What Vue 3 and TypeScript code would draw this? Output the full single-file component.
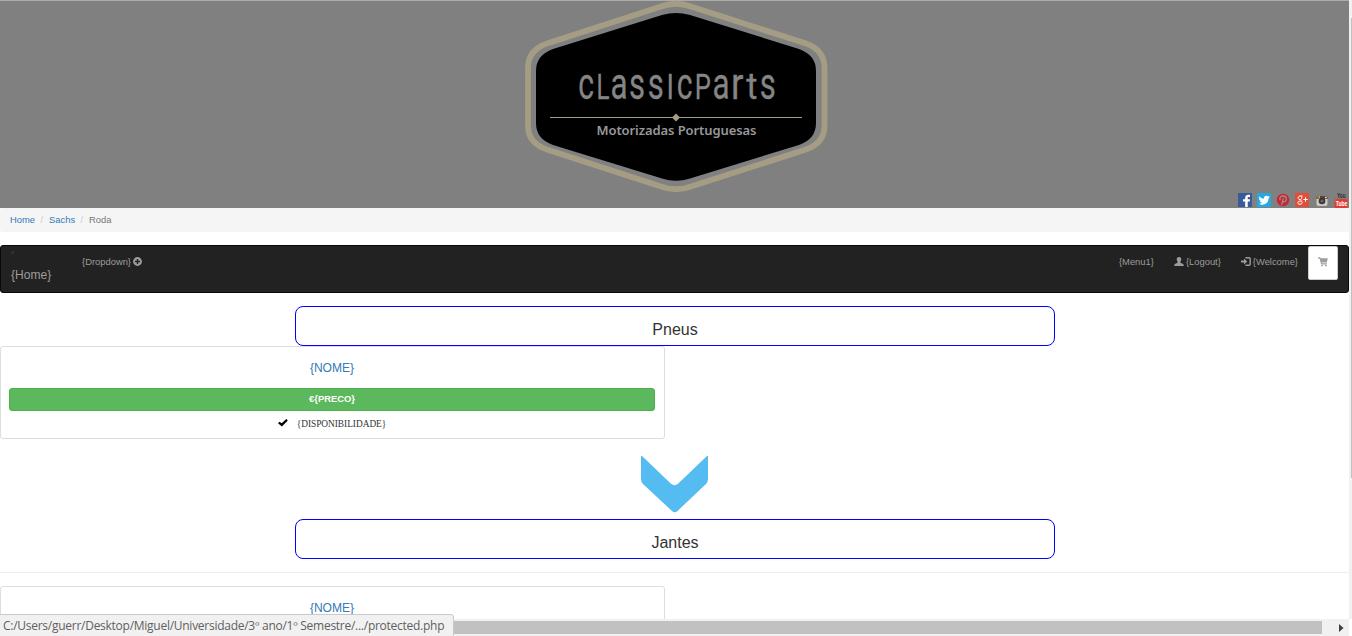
<script setup lang="ts">
interface Glyph {
  ch: string
  x: number
  scale: number
  size: number
}

const wordmark: Glyph[] = [
  { ch: 'c', x: 578.3, scale: 0.67, size: 45 },
  { ch: 'L', x: 596.4, scale: 0.67, size: 36 },
  { ch: 'a', x: 610.4, scale: 0.7, size: 45 },
  { ch: 's', x: 629, scale: 0.69, size: 45 },
  { ch: 's', x: 647.7, scale: 0.69, size: 45 },
  { ch: 'I', x: 666.6, scale: 0.76, size: 36 },
  { ch: 'c', x: 676.7, scale: 0.67, size: 45 },
  { ch: 'P', x: 694.8, scale: 0.71, size: 36 },
  { ch: 'a', x: 712.4, scale: 0.7, size: 45 },
  { ch: 'r', x: 731, scale: 0.82, size: 45 },
  { ch: 't', x: 746.3, scale: 0.92, size: 37 },
  { ch: 's', x: 759.7, scale: 0.69, size: 45 },
]
const crumbs = ['Home', 'Sachs']
</script>

<template>
  <div class="window">
    <div class="viewport">
      <main class="page">
        <header class="banner">
          <svg class="logo" width="304" height="193" viewBox="524 0 304 193">
            <path class="ring" d="M661 6.500Q676 1 691 6.500L806 43.500Q824.500 50 824.500 68V126Q824.500 143 806 149.500L691 186.500Q676 192 661 186.500L547 149.500Q528 143 528 126V68Q528 50 547 43.500Z" />
            <path d="M662 15Q676 11 690 15L799 49Q816 55 816 71V123Q816 139 799 145L690 178.500Q676 183 662 178.500L553 145Q536 139 536 123V71Q536 55 553 49Z" />
            <g class="wordmark">
              <text v-for="(g, i) in wordmark" :key="i" :transform="`translate(${g.x} 99) scale(${g.scale} 1)`" :font-size="g.size">{{ g.ch }}</text>
            </g>
            <path d="M550 117.500H802" stroke="#a59c84" />
            <path d="M676 113.500L680 117.500L676 121.500L672 117.500Z" fill="#a59c84" />
            <text class="tagline" x="596.500" y="135.300" textLength="160">Motorizadas Portuguesas</text>
          </svg>
          <div class="social">
            <svg width="14" height="14" viewBox="0 0 14 14"><rect width="14" height="14" fill="#3a5a99" /><path d="M7.200 14V8.500H5V6.300h2.200V4.700C7.200 2.400 8.700 1.400 12 1.800V4H10.600C9.700 4 9.700 4.500 9.700 5v1.300H12l-.3 2.200h-2V14z" fill="#fff" /></svg>
            <svg width="14" height="14" viewBox="0 0 14 14"><rect width="14" height="14" rx="1" fill="#24aae1" /><path d="M2 3.200C3.500 4.800 5 5.500 7 5.600C6.700 3 9.200 1.700 11 3.400L12.500 2.800L11.800 4.300L12.700 4.200L11.500 5.500C11.400 10.700 6 13.300 1.800 10.700C3.200 10.800 4.200 10.400 5 9.700C3.700 9.500 3 8.900 2.800 8H4C2.700 7.500 2 6.700 2 5.500L3 5.800C1.900 5 1.700 4.200 2 3.200Z" fill="#fff" /></svg>
            <svg width="14" height="14" viewBox="0 0 14 14"><circle cx="7" cy="7" r="6.200" fill="#ca2432" /><path d="M4.300 7.200C2.900 4.500 4.900 3 7.300 3C11.700 3.200 10.800 9 8 8.900C7.200 8.900 6.800 8.400 6.700 8M7.300 5.300L5.600 12" fill="none" stroke="#a08c8c" stroke-width="1.300" /></svg>
            <svg width="14" height="14" viewBox="0 0 14 14"><rect width="14" height="14" rx="1" fill="#e64b37" /><path d="M7.500 3H5.300C2.500 3 2.500 6.600 5 6.600C7.300 6.600 7 3.500 5.700 3.200M5.200 6.700L6.700 8.200C9 11.800 2.400 12.200 2.800 9.500C3 8.400 4.300 8.100 5.800 8.200M8.300 6.500h4.400M10.500 4.300v4.400" fill="none" stroke="#fff" stroke-width="1" /></svg>
            <svg width="14" height="14" viewBox="0 0 14 14"><path d="M1.500 6V4.500Q1.500 3 3 3H11Q12.500 3 12.500 4.500V6Z" fill="#5b4433" /><path d="M3 3v3M4.500 3v3" stroke="#c9a24c" /><path d="M1.500 6h11v5Q12.500 13 10.500 13h-7Q1.500 13 1.500 11Z" fill="#d0c8bd" /><circle cx="7" cy="8" r="3.300" fill="#36373b" /><circle cx="7" cy="8" r="1.600" fill="#62686f" /><rect x="10" y="3.700" width="1.700" height="1.500" fill="#ddd" /></svg>
            <svg class="tube" width="14" height="15" viewBox="0 0 14 15"><rect x=".5" y="6" width="13" height="9" rx="1.500" fill="#e43b35" /><text transform="translate(3 5.300) scale(.68 1)" font-size="7" fill="#302c2c">You</text><text transform="translate(1.700 12.800) scale(.72 1)" font-size="7" fill="#fff">Tube</text></svg>
          </div>
        </header>

        <nav class="breadcrumb">
          <template v-for="c in crumbs" :key="c"><a>{{ c }}</a><i>/</i></template><span>Roda</span>
        </nav>

        <nav class="navbar">
          <span class="dot"></span>
          <span class="brand">{Home}</span>
          <span class="item dropdown">{Dropdown}
            <svg width="9" height="9" viewBox="0 0 9 9"><circle cx="4.500" cy="4.500" r="4.400" /><path d="M4.500 2v5M2 4.500h5" stroke="#222" stroke-width="1.400" /></svg>
          </span>
          <span class="item menu">{Menu1}</span>
          <span class="item logout">
            <svg width="10" height="9" viewBox="0 0 10 9"><path d="M5 0C7 0 7.500 1.500 7.200 3C7 4.100 6.300 4.700 6.300 5.500C6.600 6.500 9.500 6.500 9.700 8V9H.3V8C.5 6.500 3.400 6.500 3.700 5.500C3.700 4.700 3 4.100 2.800 3C2.500 1.500 3 0 5 0Z" /></svg>{Logout}
          </span>
          <span class="item welcome">
            <svg width="10" height="9" viewBox="0 0 10 9"><path d="M0 3.500H3V1.500L6.300 4.500L3 7.500V5.500H0Z" /><path d="M4.500 .8H8Q9.200 .8 9.200 2V7Q9.200 8.200 8 8.200H4.500" fill="none" stroke="#9d9d9d" stroke-width="1.400" /></svg>{Welcome}
          </span>
          <span class="cart">
            <svg width="10" height="10" viewBox="0 0 10 10"><path d="M0 .2H2.100L2.600 1.300H9.800L8.800 5.600H3.700L4 6.300H8.800V7.400H3.200L1.500 1.400H0Z" /><circle cx="4" cy="8.600" r=".9" /><circle cx="7.800" cy="8.600" r=".9" /></svg>
          </span>
        </nav>

        <h3 class="section">Pneus</h3>
        <article class="card">
          <h4>{NOME}</h4>
          <div class="price">€{PRECO}</div>
          <p>
            <svg width="10" height="8" viewBox="0 0 10 8"><path d="M0 4.300L1.600 2.700L3.700 4.200L8.300 0L9.800 1.500L3.900 7.600Z" /></svg>
            <span>{DISPONIBILIDADE}</span>
          </p>
        </article>
        <svg class="arrow" width="68" height="58" viewBox="0 0 68 58"><path d="M1 1.500Q1 .2 2 1L31 28.800Q34.500 31.600 38 28.800L67 1Q68 .2 68 1.500V24Q68 27 66 29L37.500 56Q34.700 58.500 32 56L3 29Q1 27 1 24Z" fill="#55bcf1" /></svg>
        <h3 class="section">Jantes</h3>
        <hr>
        <article class="card">
          <h4>{NOME}</h4>
        </article>
      </main>
      <div class="vbar"><div class="vthumb"></div></div>
    </div>
    <div class="hbar">
      <div class="hthumb"></div>
      <svg width="5" height="8" viewBox="0 0 5 8"><path d="M0 0L4.500 4L0 8Z" fill="#404040" /></svg>
    </div>
    <div class="status"><span>C:/Users/guerr/Desktop/Miguel/Universidade/3º ano/1º Semestre/.../protected.php</span></div>
  </div>
</template>

<style>
body {
  overflow: hidden;
}
</style>

<style scoped>
.window {
  position: relative;
  width: 1352px;
  height: 636px;
  overflow: hidden;
  display: flex;
  flex-direction: column;
  background: #fff;
  font: 9.38px/13.4px "Liberation Sans", Arial, sans-serif;
  color: #333;
}
.window * {
  box-sizing: border-box;
}
svg {
  flex: none;
}
.viewport {
  display: flex;
  height: 619px;
  overflow: hidden;
}
.page {
  width: 1349px;
  display: flex;
  flex-direction: column;
  align-items: flex-start;
}
.banner {
  position: relative;
  flex: none;
  width: 100%;
  height: 208px;
  background: #808080;
  border-top: 1px solid #acacac;
  display: flex;
  justify-content: center;
}
.logo {
  display: block;
  margin-top: -1px;
  margin-left: 3px;
}
.ring {
  fill: none;
  stroke: #a59c84;
  stroke-width: 5.8;
}
.wordmark {
  fill: #858585;
  stroke: #858585;
  stroke-width: 0.3;
  font-family: Roboto, sans-serif;
}
.tagline {
  fill: #989898;
  font: 600 13px "Noto Sans", sans-serif;
}
.social {
  position: absolute;
  right: 1px;
  bottom: 1px;
  display: flex;
  align-items: flex-end;
  gap: 5.3px;
}
.social .tube {
  overflow: visible;
  margin-bottom: -0.5px;
}
.social text {
  font-family: "Liberation Sans", sans-serif;
  font-weight: bold;
}
.breadcrumb {
  flex: none;
  width: 100%;
  height: 24px;
  padding: 6px 10px 4px;
  background: #f5f5f5;
  border-radius: 3px;
  color: #777;
}
.breadcrumb a {
  color: #337ab7;
}
.breadcrumb i {
  font-style: normal;
  color: #ccc;
  padding: 0 6px 0 5.4px;
}
.navbar {
  flex: none;
  display: flex;
  width: 100%;
  height: 48px;
  margin-top: 13px;
  padding: 0 10px;
  background: #222;
  border: 1px solid #080808;
  border-radius: 3px;
  color: #9d9d9d;
  fill: #9d9d9d;
  position: relative;
}
.dot {
  position: absolute;
  left: 10px;
  top: 5px;
  width: 3px;
  height: 3px;
  border-radius: 50%;
  background: #333;
}
.brand {
  width: 71px;
  font-size: 12.06px;
  padding-top: 23px;
}
.item {
  display: flex;
  gap: 2px;
  height: 13px;
  margin-top: 10px;
}
.item svg {
  margin-top: 1px;
}
.menu {
  margin-left: auto;
  margin-right: 20px;
}
.logout {
  margin-right: 20px;
}
.welcome {
  margin-right: 10px;
}
.cart {
  width: 30px;
  height: 34px;
  margin-top: 0;
  background: #fff;
  border: 1px solid #ccc;
  border-radius: 2px;
  padding: 10px 9px;
}
.cart svg {
  display: block;
}
.section {
  flex: none;
  width: 760px;
  height: 40px;
  margin: 13px 0 0 295px;
  padding-top: 14px;
  border: 1px solid #00f;
  border-radius: 8px;
  font-size: 16px;
  line-height: 18px;
  font-weight: 400;
  text-align: center;
}
.card {
  flex: none;
  width: 665px;
  height: 93px;
  padding: 14px 9px 0 8px;
  border: 1px solid #ddd;
  border-radius: 3px;
  text-align: center;
}
.card h4 {
  margin: 0;
  font-size: 12.06px;
  line-height: 15px;
  font-weight: 400;
  color: #337ab7;
}
.price {
  height: 23px;
  margin-top: 12px;
  padding-top: 4px;
  background: #5cb85c;
  border: 1px solid #4cae4c;
  border-radius: 3px;
  color: #fff;
  font-weight: 700;
}
.card p {
  display: flex;
  justify-content: center;
  margin: 7px 0 0;
  gap: 9px;
  font-family: "Liberation Serif", serif;
  letter-spacing: -0.04px;
}
.card p svg {
  margin-top: 1px;
}
.arrow {
  display: block;
  margin: 16px 0 0 640px;
}
.arrow + .section {
  margin-top: 6px;
}
hr {
  flex: none;
  width: 100%;
  height: 1px;
  margin: 13px 0;
  border: 0;
  background: #eee;
}
.vbar {
  width: 3px;
  background: #f1f1f1;
  padding: 18px 0 0 2px;
}
.vthumb {
  height: 460px;
  background: #c1c1c1;
}
.hbar {
  display: flex;
  align-items: center;
  height: 17px;
  width: 1349px;
  background: #f1f1f1;
}
.hthumb {
  width: 1305px;
  height: 13px;
  margin: 0 17px;
  background: #c1c1c1;
}
.status {
  position: absolute;
  left: -1px;
  top: 614px;
  width: 455px;
  height: 23px;
  padding: 2px 0 0 3px;
  background: #f1f1f1;
  border: 1px solid #c9c9c9;
  border-radius: 0 3px 0 0;
  color: #5f5f5f;
  font: 12px/18px "Open Sans", sans-serif;
  letter-spacing: -0.265px;
  white-space: nowrap;
}
</style>
